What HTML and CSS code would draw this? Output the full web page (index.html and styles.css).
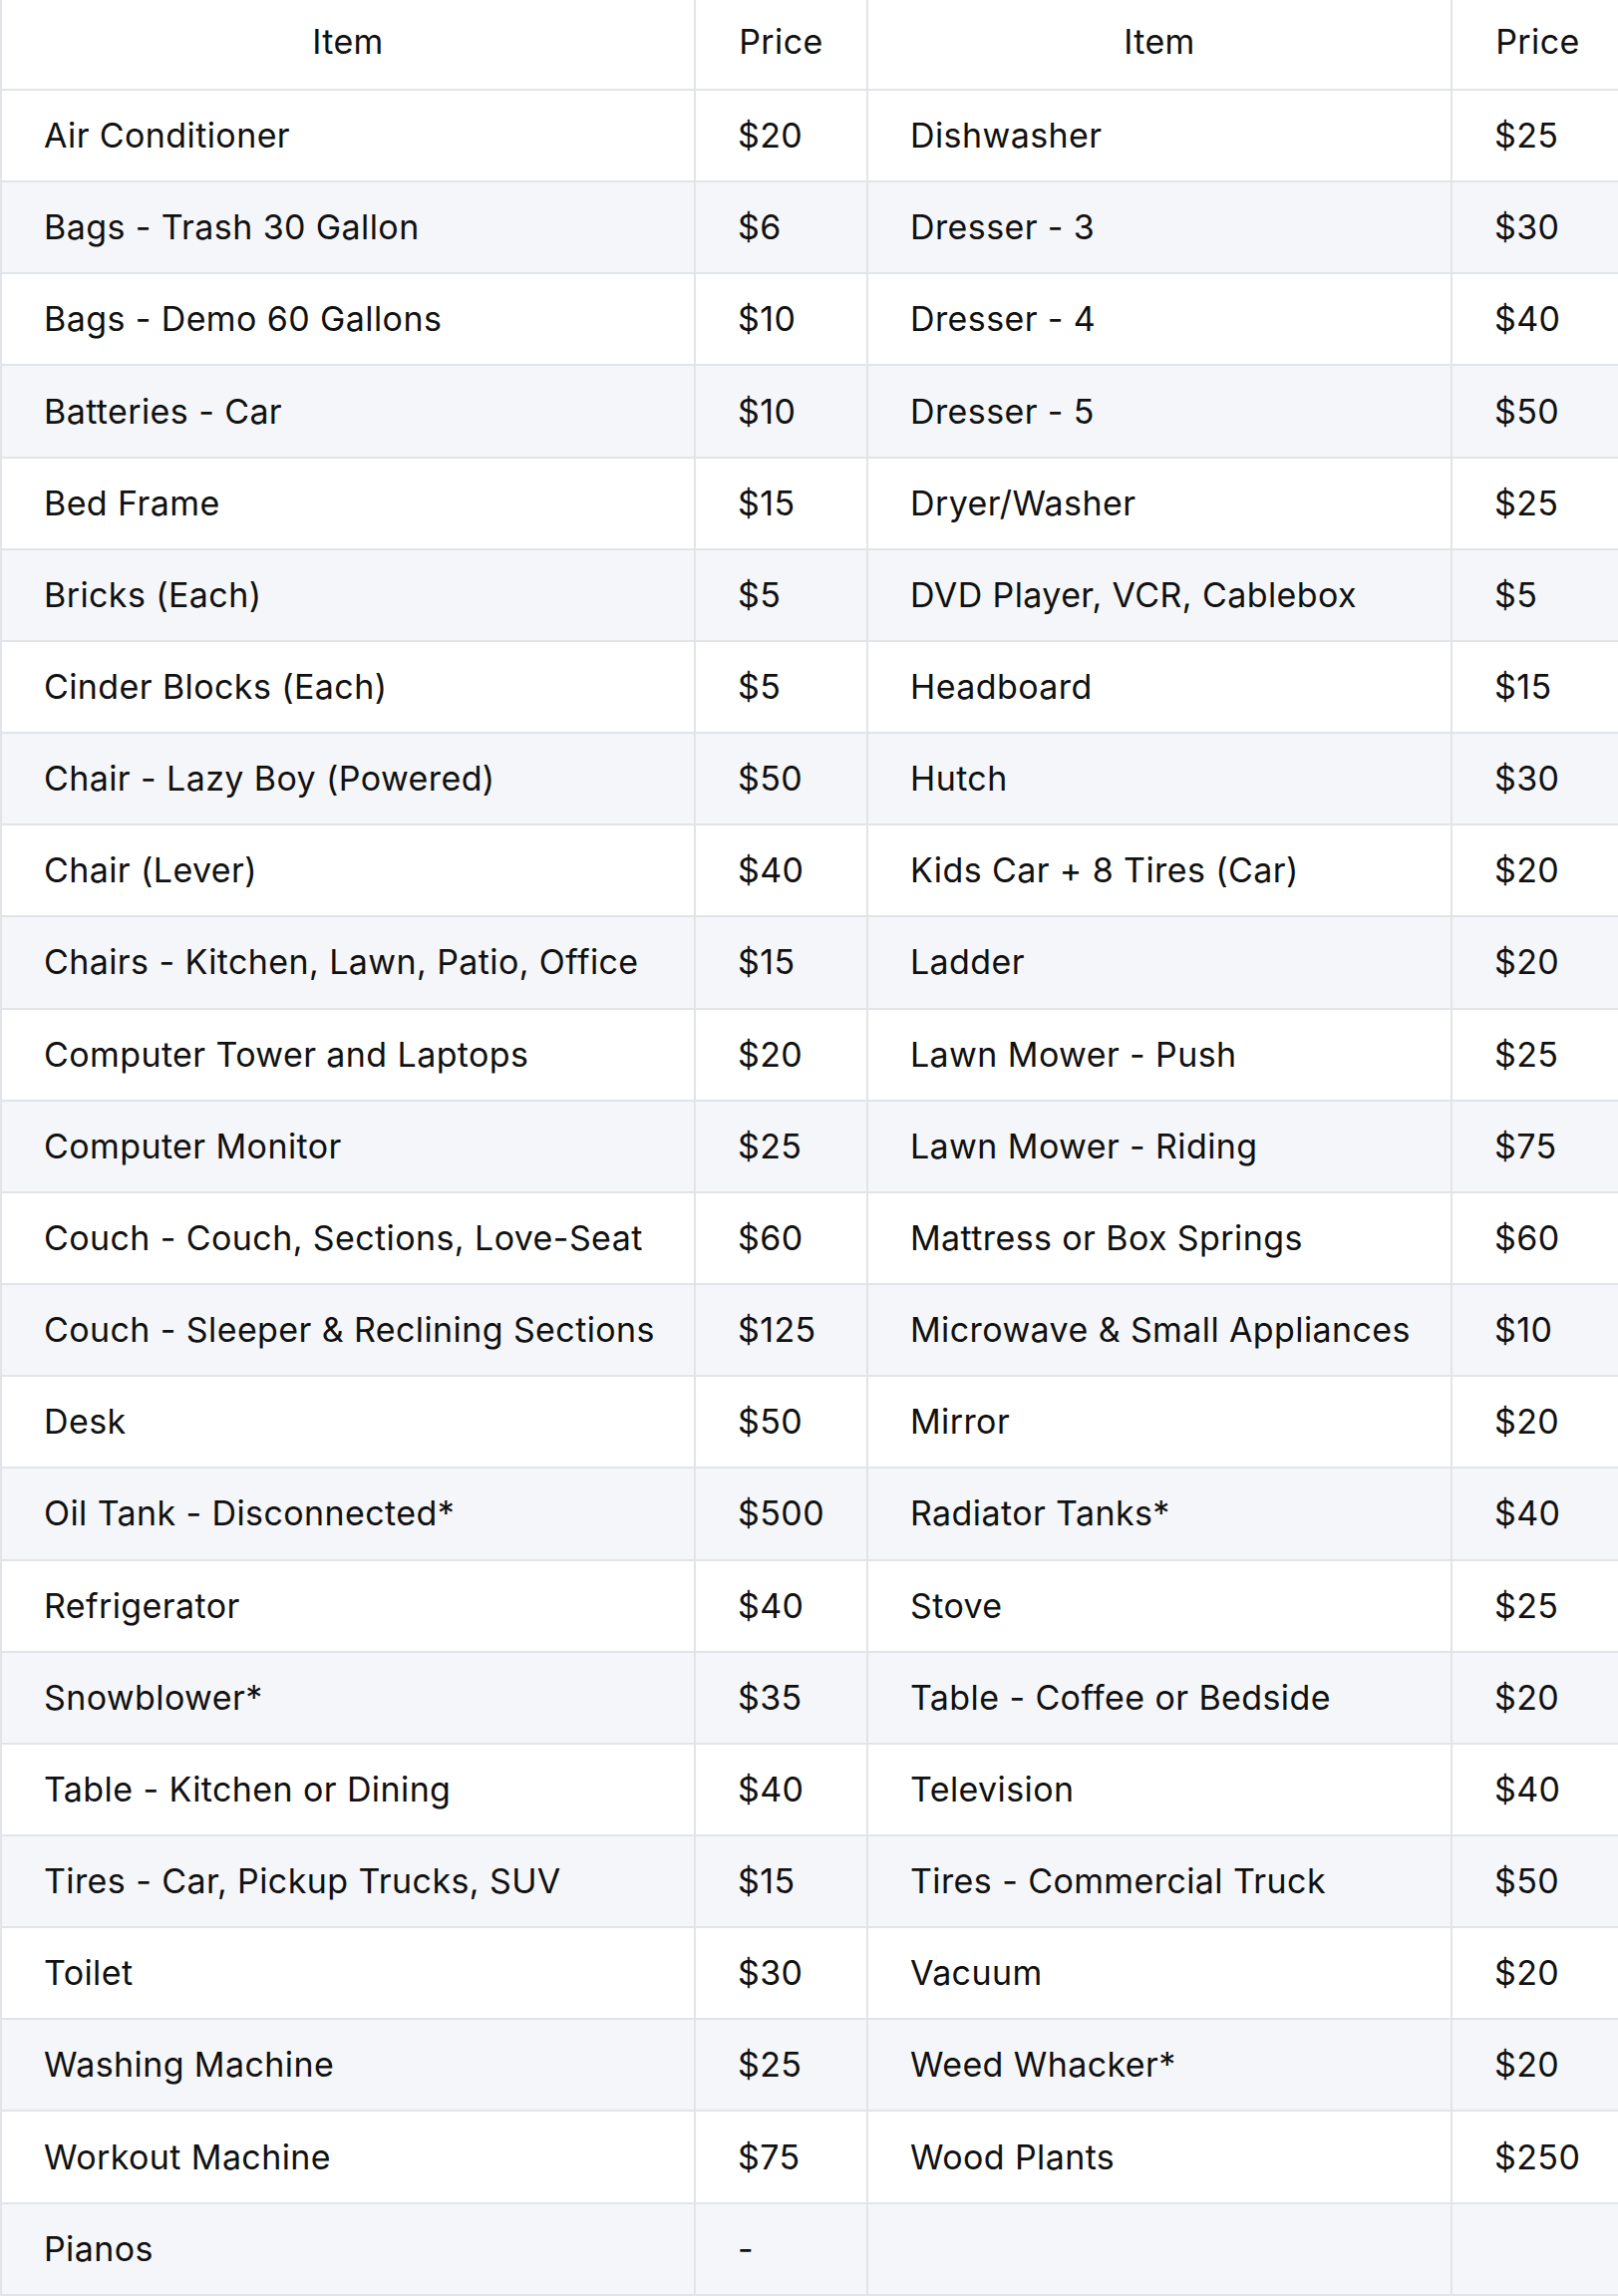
FILE: index.html
```html
<!DOCTYPE html>
<html>
<head>
<meta charset="utf-8">
<link rel="stylesheet" href="styles.css">
</head>
<body>
<table class="price-table">
  <colgroup>
    <col class="c-item1">
    <col class="c-price1">
    <col class="c-item2">
    <col class="c-price2">
  </colgroup>
  <thead>
    <tr><th>Item</th><th>Price</th><th>Item</th><th>Price</th></tr>
  </thead>
  <tbody>
    <tr><td>Air Conditioner</td><td>$20</td><td>Dishwasher</td><td>$25</td></tr>
    <tr><td>Bags - Trash 30 Gallon</td><td>$6</td><td>Dresser - 3</td><td>$30</td></tr>
    <tr><td>Bags - Demo 60 Gallons</td><td>$10</td><td>Dresser - 4</td><td>$40</td></tr>
    <tr><td>Batteries - Car</td><td>$10</td><td>Dresser - 5</td><td>$50</td></tr>
    <tr><td>Bed Frame</td><td>$15</td><td>Dryer/Washer</td><td>$25</td></tr>
    <tr><td>Bricks (Each)</td><td>$5</td><td>DVD Player, VCR, Cablebox</td><td>$5</td></tr>
    <tr><td>Cinder Blocks (Each)</td><td>$5</td><td>Headboard</td><td>$15</td></tr>
    <tr><td>Chair - Lazy Boy (Powered)</td><td>$50</td><td>Hutch</td><td>$30</td></tr>
    <tr><td>Chair (Lever)</td><td>$40</td><td>Kids Car + 8 Tires (Car)</td><td>$20</td></tr>
    <tr><td>Chairs - Kitchen, Lawn, Patio, Office</td><td>$15</td><td>Ladder</td><td>$20</td></tr>
    <tr><td>Computer Tower and Laptops</td><td>$20</td><td>Lawn Mower - Push</td><td>$25</td></tr>
    <tr><td>Computer Monitor</td><td>$25</td><td>Lawn Mower - Riding</td><td>$75</td></tr>
    <tr><td>Couch - Couch, Sections, Love-Seat</td><td>$60</td><td>Mattress or Box Springs</td><td>$60</td></tr>
    <tr><td>Couch - Sleeper &amp; Reclining Sections</td><td>$125</td><td>Microwave &amp; Small Appliances</td><td>$10</td></tr>
    <tr><td>Desk</td><td>$50</td><td>Mirror</td><td>$20</td></tr>
    <tr><td>Oil Tank - Disconnected*</td><td>$500</td><td>Radiator Tanks*</td><td>$40</td></tr>
    <tr><td>Refrigerator</td><td>$40</td><td>Stove</td><td>$25</td></tr>
    <tr><td>Snowblower*</td><td>$35</td><td>Table - Coffee or Bedside</td><td>$20</td></tr>
    <tr><td>Table - Kitchen or Dining</td><td>$40</td><td>Television</td><td>$40</td></tr>
    <tr><td>Tires - Car, Pickup Trucks, SUV</td><td>$15</td><td>Tires - Commercial Truck</td><td>$50</td></tr>
    <tr><td>Toilet</td><td>$30</td><td>Vacuum</td><td>$20</td></tr>
    <tr><td>Washing Machine</td><td>$25</td><td>Weed Whacker*</td><td>$20</td></tr>
    <tr><td>Workout Machine</td><td>$75</td><td>Wood Plants</td><td>$250</td></tr>
    <tr><td>Pianos</td><td>-</td><td></td><td></td></tr>
  </tbody>
</table>
</body>
</html>
```

FILE: styles.css
```css
html {
  overflow-x: hidden;
}
body {
  margin: 0;
  background: #ffffff;
  font-family: Inter, "Noto Sans", "Liberation Sans", sans-serif;
  color: #111111;
}
.price-table {
  border-collapse: collapse;
  table-layout: fixed;
  width: 1628px;
  font-size: 34px;
  line-height: 40px;
  letter-spacing: 0.4px;
}
.c-item1 { width: 696px; }
.c-price1 { width: 173px; }
.c-item2 { width: 586px; }
.c-price2 { width: 173px; }
.price-table th,
.price-table td {
  border: 2px solid #e1e4e8;
  padding: 0 0 0 42px;
  text-align: left;
  font-weight: 400;
  white-space: nowrap;
}
.price-table th {
  border-top: none;
  height: 84px;
  padding: 0 0 5px 0;
  text-align: center;
}
.price-table td {
  height: 90.17px;
}
.price-table tbody tr:nth-child(even) td {
  background: #f5f6f9;
}
```
